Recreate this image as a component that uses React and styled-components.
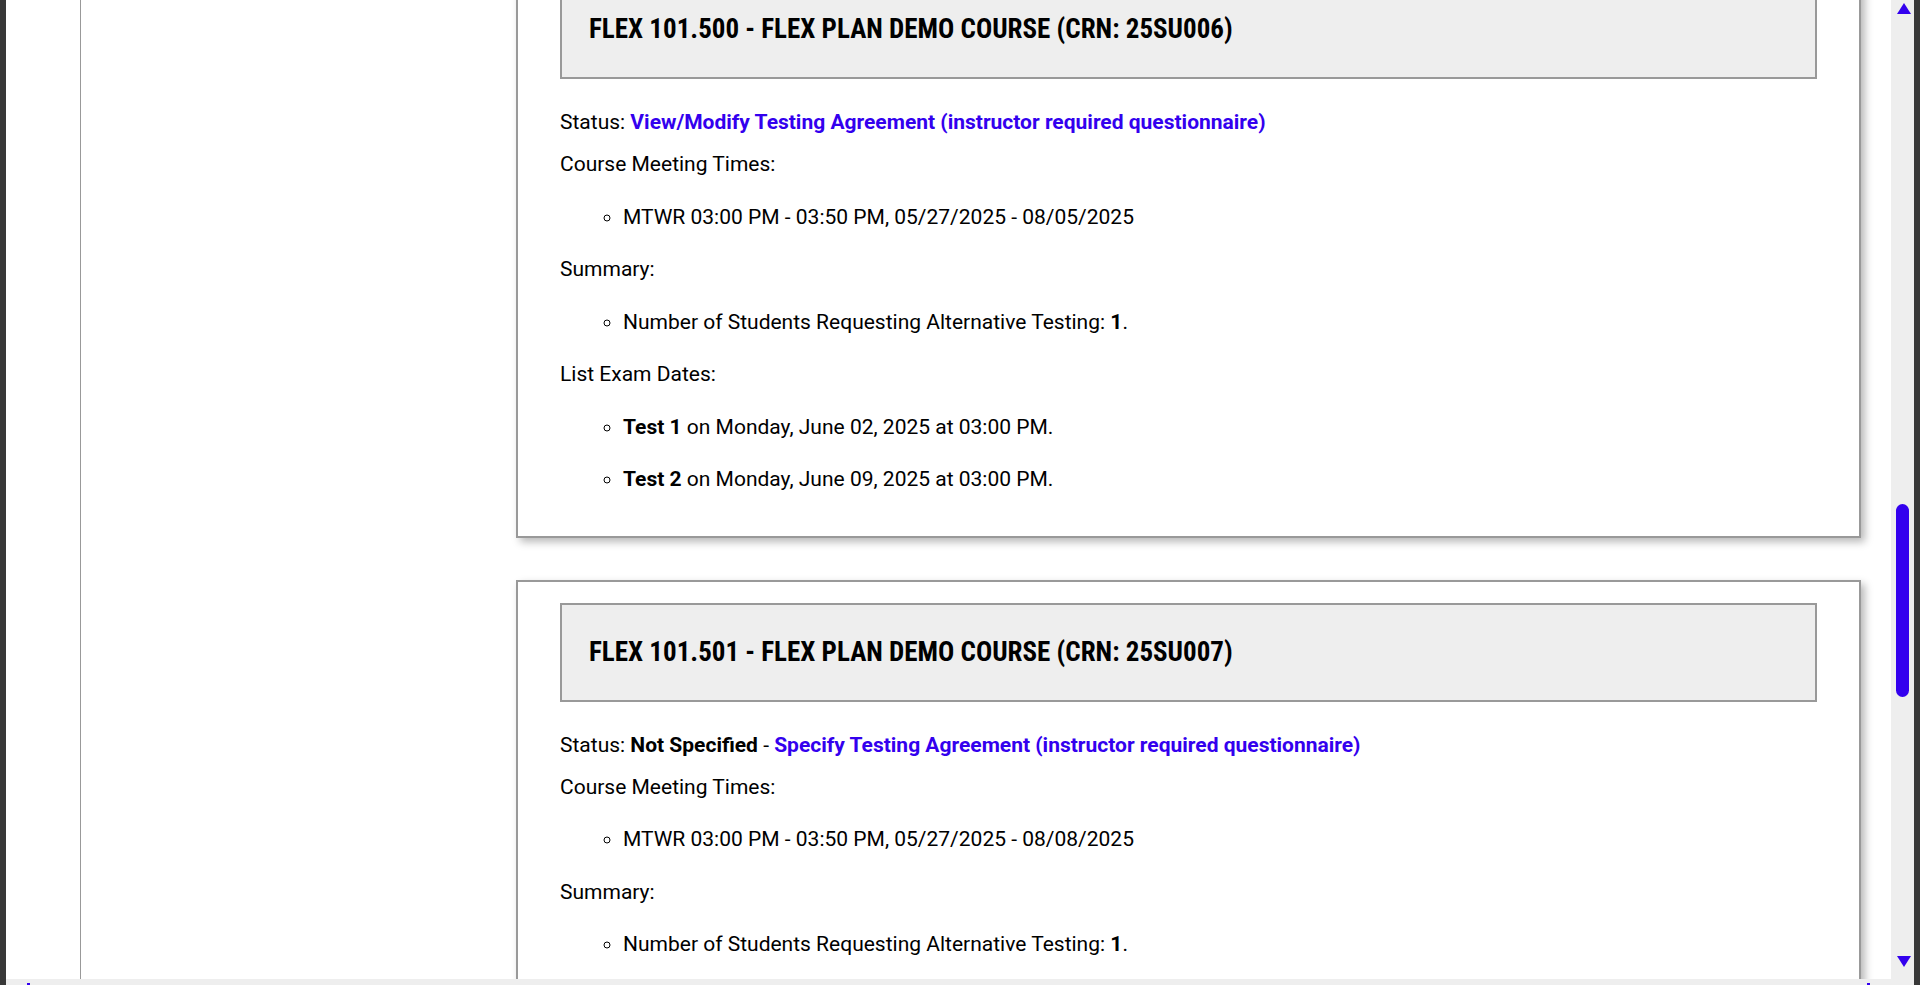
import React from 'react'
import styled, { createGlobalStyle } from 'styled-components'

const GlobalStyle = createGlobalStyle`
  html, body {
    margin: 0;
    padding: 0;
    overflow: hidden;
    background: #383838;
  }
  body {
    font-family: Roboto, "Noto Sans", "Liberation Sans", sans-serif;
  }
`

const Screen = styled.div`
  display: flex;
  height: 985px;
  padding: 0 6px;
  background: #383838;
  box-sizing: border-box;
`

const Window = styled.div`
  flex: 1;
  display: flex;
  flex-direction: column;
  min-width: 0;
`

const Viewport = styled.div`
  flex: 1;
  display: flex;
  min-height: 0;
`

const Content = styled.div`
  flex: 1;
  display: flex;
  background: #fff;
  overflow: hidden;
  min-width: 0;
`

const Gutter = styled.div`
  width: 74px;
  flex-shrink: 0;
  border-right: 1px solid #999;
`

const Sidebar = styled.div`
  width: 435px;
  flex-shrink: 0;
`

const Main = styled.main`
  flex: 1;
  min-width: 0;
  padding-right: 30px;
`

/* the page is scrolled: first card starts above the fold */
const CardList = styled.div`
  display: flex;
  flex-direction: column;
  gap: 42px;
  margin-top: -43px;
`

const Card = styled.section`
  border: 2px solid #999;
  background: #fff;
  padding: 21px 42px 19px;
  box-shadow: 4px 4px 8px rgba(0, 0, 0, 0.28);
  color: #000;
  font-size: 21px;
  line-height: 31.5px;
`

const CourseHeader = styled.div`
  background: #eee;
  border: 2px solid #999;
  padding: 31px 27px;
`

const CourseTitle = styled.h2`
  margin: 0;
  font-family: "Roboto Condensed", "DejaVu Sans Condensed", Roboto, sans-serif;
  font-weight: 700;
  font-size: 27px;
  line-height: 33px;
  color: #000;
`

const StatusLine = styled.p`
  margin: 28px 0 10.5px;
`

const Label = styled.p`
  margin: 0;
`

const Link = styled.a`
  color: #3300ee;
  font-weight: 700;
  text-decoration: none;
  cursor: pointer;
`

const Bullets = styled.ul`
  margin: 21px 0;
  padding-left: 63px;
  list-style-type: circle;

  li + li {
    margin-top: 21px;
  }
`

const VScrollbar = styled.div`
  position: relative;
  width: 23px;
  flex-shrink: 0;
  background: #eee;
  display: flex;
  flex-direction: column;
  align-items: center;
  justify-content: space-between;
  padding: 3px 0 12px;
  box-sizing: border-box;
`

const Arrow = styled.div`
  width: 0;
  height: 0;
  margin-left: 2px;
  border-left: 7px solid transparent;
  border-right: 7px solid transparent;
  ${p => (p.$down ? 'border-top: 11px solid #3300ee;' : 'border-bottom: 11px solid #3300ee;')}
`

const Thumb = styled.div`
  position: absolute;
  left: 5px;
  width: 13px;
  border-radius: 7px;
  background: #3300ee;
`

const HScrollbar = styled.div`
  height: 6px;
  flex-shrink: 0;
  background: #eee;
  display: flex;
  align-items: flex-end;
  justify-content: space-between;
  padding: 0 44px 0 21px;
`

const ArrowTip = styled.span`
  width: 3px;
  height: 2px;
  background: #3300ee;
`

const courses = [
  {
    title: 'FLEX 101.500 - FLEX PLAN DEMO COURSE (CRN: 25SU006)',
    status: null,
    link: 'View/Modify Testing Agreement (instructor required questionnaire)',
    meeting: 'MTWR 03:00 PM - 03:50 PM, 05/27/2025 - 08/05/2025',
    students: 1,
    exams: [
      { name: 'Test 1', when: 'Monday, June 02, 2025 at 03:00 PM' },
      { name: 'Test 2', when: 'Monday, June 09, 2025 at 03:00 PM' },
    ],
  },
  {
    title: 'FLEX 101.501 - FLEX PLAN DEMO COURSE (CRN: 25SU007)',
    status: 'Not Specified',
    link: 'Specify Testing Agreement (instructor required questionnaire)',
    meeting: 'MTWR 03:00 PM - 03:50 PM, 05/27/2025 - 08/08/2025',
    students: 1,
    exams: [
      { name: 'Test 1', when: 'Monday, June 02, 2025 at 03:00 PM' },
    ],
  },
]

const CourseCard = ({ course }) => (
  <Card>
    <CourseHeader>
      <CourseTitle>{course.title}</CourseTitle>
    </CourseHeader>
    <StatusLine>
      Status:{' '}
      {course.status && (
        <>
          <b>{course.status}</b> -{' '}
        </>
      )}
      <Link>{course.link}</Link>
    </StatusLine>
    <Label>Course Meeting Times:</Label>
    <Bullets>
      <li>{course.meeting}</li>
    </Bullets>
    <Label>Summary:</Label>
    <Bullets>
      <li>
        Number of Students Requesting Alternative Testing: <b>{course.students}</b>.
      </li>
    </Bullets>
    <Label>List Exam Dates:</Label>
    <Bullets>
      {course.exams.map((exam, index) => (
        <li key={index}>
          <b>{exam.name}</b> on {exam.when}.
        </li>
      ))}
    </Bullets>
  </Card>
)

const App = () => {
  return (
    <>
      <GlobalStyle />
      <Screen>
        <Window>
          <Viewport>
            <Content>
              <Gutter />
              <Sidebar />
              <Main>
                <CardList>
                  {courses.map((course, index) => (
                    <CourseCard key={index} course={course} />
                  ))}
                </CardList>
              </Main>
            </Content>
            <VScrollbar>
              <Arrow />
              <Thumb style={{ top: 504, height: 193 }} />
              <Arrow $down />
            </VScrollbar>
          </Viewport>
          <HScrollbar>
            <ArrowTip />
            <ArrowTip />
          </HScrollbar>
        </Window>
      </Screen>
    </>
  )
}

export default App
